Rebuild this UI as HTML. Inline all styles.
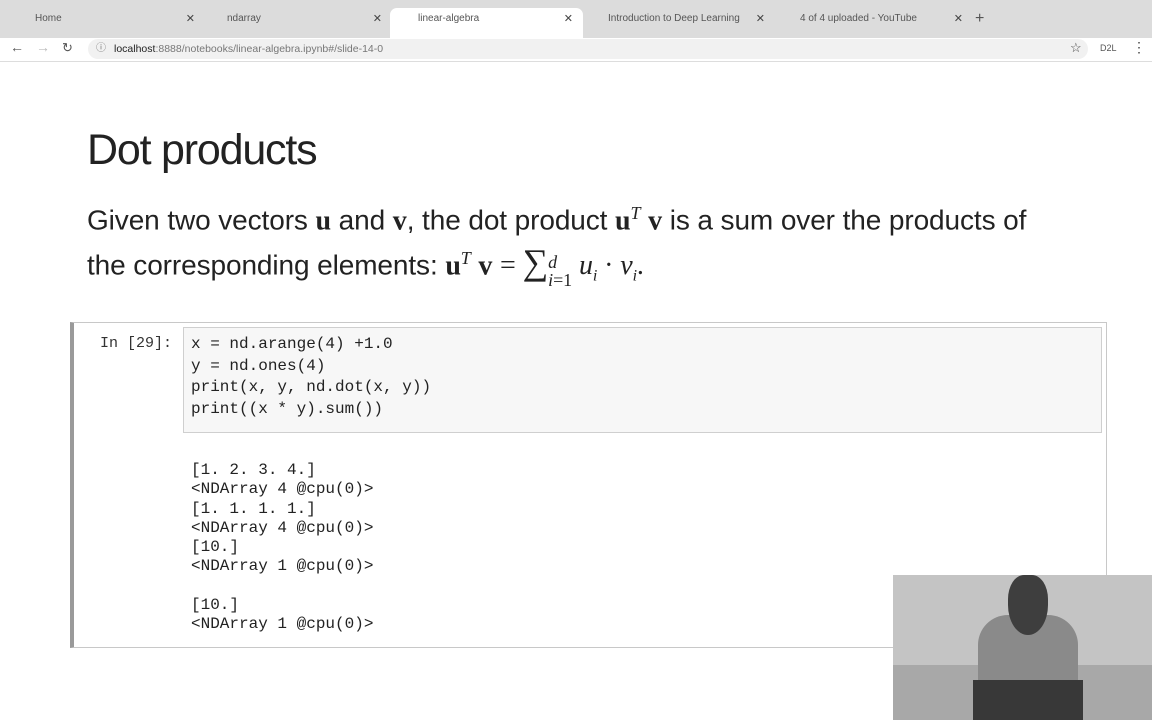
<!DOCTYPE html>
<html><head><meta charset="utf-8"><style>
*{margin:0;padding:0;box-sizing:border-box}
body{width:1152px;height:720px;overflow:hidden;background:#fff;font-family:"Liberation Sans",sans-serif;position:relative}
.tabs{position:absolute;left:0;top:0;width:1152px;height:38px;background:#dcdcdc}
.tab{position:absolute;top:8px;height:30px;font-size:10px;color:#555;line-height:22px}
.tab .x{position:absolute;right:0;top:0;font-size:11px;color:#444}
.active{background:#fff;border-radius:7px 7px 0 0}
.addr{position:absolute;left:0;top:38px;width:1152px;height:24px;background:#fff;border-bottom:1px solid #ddd}
.url{position:absolute;left:88px;top:1px;width:1000px;height:20px;background:#f1f1f1;border-radius:10px;font-size:10.5px;color:#777;line-height:20px;padding-left:26px}
.url b{font-weight:normal;color:#222}
h1{position:absolute;left:87px;top:126px;font-size:43px;font-weight:normal;letter-spacing:-1.2px;color:#222}
.p{position:absolute;left:87px;font-size:28px;color:#222;letter-spacing:-0.1px;white-space:nowrap}
.m{font-family:"Liberation Serif",serif}
.cell{position:absolute;left:70px;top:322px;width:1037px;height:326px;border:1px solid #c8c8c8;border-left:4px solid #9a9a9a}
.prompt{position:absolute;left:100px;top:335px;font-family:"Liberation Mono","Courier New",monospace;font-size:15px;color:#333}
.inp{position:absolute;left:183px;top:327px;width:919px;height:106px;background:#f7f7f7;border:1px solid #cfcfcf}
pre{font-family:"Liberation Mono","Courier New",monospace;font-size:16px;color:#222;line-height:21.7px;position:absolute}
.cam{position:absolute;left:893px;top:575px;width:259px;height:145px;background:#b8b8b8;overflow:hidden}
.ss{display:inline-block;vertical-align:middle;font-size:18px;line-height:18px;position:relative;top:3px}
</style></head><body>
<div class="tabs">
 <div class="tab" style="left:15px;width:180px"><span style="padding-left:20px">Home</span><span class="x">✕</span></div>
 <div class="tab" style="left:207px;width:175px"><span style="padding-left:20px">ndarray</span><span class="x">✕</span></div>
 <div class="tab active" style="left:390px;width:193px;padding-left:28px">linear-algebra<span class="x" style="right:10px">✕</span></div>
 <div class="tab" style="left:590px;width:175px"><span style="padding-left:18px">Introduction to Deep Learning</span><span class="x">✕</span></div>
 <div class="tab" style="left:783px;width:180px"><span style="padding-left:17px">4 of 4 uploaded - YouTube</span><span class="x">✕</span></div>
 <div class="tab" style="left:975px;font-size:16px">+</div>
</div>
<div class="addr">
 <span style="position:absolute;left:10px;top:1px;font-size:14px;color:#555">←</span>
 <span style="position:absolute;left:36px;top:1px;font-size:14px;color:#bbb">→</span>
 <span style="position:absolute;left:62px;top:2px;font-size:13px;color:#555">↻</span>
 <div class="url"><span style="position:absolute;left:8px;font-size:10px">ⓘ</span><b>localhost</b>:8888/notebooks/linear-algebra.ipynb#/slide-14-0</div>
 <span style="position:absolute;left:1070px;top:2px;font-size:13px;color:#444">☆</span>
 <span style="position:absolute;left:1100px;top:5px;font-size:9px;color:#555">D2L</span>
 <span style="position:absolute;left:1132px;top:1px;font-size:14px;color:#444">⋮</span>
</div>
<h1>Dot products</h1>
<div class="p" style="top:203px">Given two vectors <b class="m">u</b> and <b class="m">v</b>, the dot product <b class="m">u</b><sup class="m" style="font-size:18px"><i>T</i></sup> <b class="m">v</b> is a sum over the products of</div>
<div class="p" style="top:248px">the corresponding elements: <b class="m">u</b><sup class="m" style="font-size:18px"><i>T</i></sup> <b class="m">v</b> <span class="m">= <span style="font-size:36px;line-height:20px">∑</span><span class="ss"><i>d</i><br><i>i</i>=1</span> <i>u<sub style="font-size:16px">i</sub></i> · <i>v<sub style="font-size:16px">i</sub></i>.</span></div>
<div class="cell"></div>
<div class="prompt">In [29]:</div>
<div class="inp"></div>
<pre style="left:191px;top:334px">x = nd.arange(4) +1.0
y = nd.ones(4)
print(x, y, nd.dot(x, y))
print((x * y).sum())</pre>
<pre style="left:191px;top:461px;line-height:19.3px">[1. 2. 3. 4.]
&lt;NDArray 4 @cpu(0)&gt;
[1. 1. 1. 1.]
&lt;NDArray 4 @cpu(0)&gt;
[10.]
&lt;NDArray 1 @cpu(0)&gt;

[10.]
&lt;NDArray 1 @cpu(0)&gt;</pre>
<div class="cam">
 <div style="position:absolute;left:0;top:0;width:259px;height:90px;background:#c4c4c4"></div>
 <div style="position:absolute;left:0;top:90px;width:259px;height:55px;background:#a8a8a8"></div>
 <div style="position:absolute;left:85px;top:40px;width:100px;height:105px;background:#8a8a8a;border-radius:30px 30px 0 0"></div>
 <div style="position:absolute;left:115px;top:0;width:40px;height:60px;background:#3e3e3e;border-radius:40% 40% 50% 50%"></div>
 <div style="position:absolute;left:80px;top:105px;width:110px;height:40px;background:#383838"></div>
</div>
</body></html>
